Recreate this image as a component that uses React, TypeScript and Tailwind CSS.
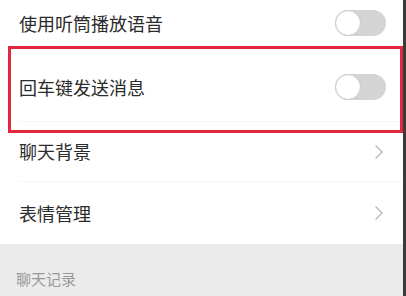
import React from "react";

const Toggle = () => (
  <div className="relative h-[26px] w-[51px] rounded-full bg-[#d4d4d4]">
    <div className="absolute left-0 top-0 h-[26px] w-[26px] rounded-full border border-[#c8c8c8] bg-white" />
  </div>
);

const Chevron = () => (
  <svg width="8" height="14" viewBox="0 0 8 14" fill="none">
    <path d="M1 1l6 6-6 6" stroke="#b5b5b5" strokeWidth="1.3" strokeLinecap="round" strokeLinejoin="round" />
  </svg>
);

const App = () => {
  const font = { fontFamily: '"Noto Sans CJK SC", "Noto Sans", sans-serif' };
  return (
    <main className="relative flex h-[296px] w-[406px] overflow-hidden bg-white" style={font}>
      <div className="flex w-[403px] flex-col">
        <div className="flex h-[53px] items-center justify-between pb-[7px] pl-[19px] pr-[17px]">
          <span className="text-[18px] text-[#2b2b2b]">使用听筒播放语音</span>
          <Toggle />
        </div>
        <div className="ml-[19px] flex h-[69px] items-center justify-between border-b border-[#f4f4f4] pr-[17px]">
          <span className="text-[18px] text-[#2b2b2b]">回车键发送消息</span>
          <Toggle />
        </div>
        <div className="ml-[19px] flex h-[60px] items-center justify-between border-b border-[#f4f4f4] pr-[20px]">
          <span className="text-[18px] text-[#2b2b2b]">聊天背景</span>
          <Chevron />
        </div>
        <div className="flex h-[62px] items-center justify-between pl-[19px] pr-[20px]">
          <span className="text-[18px] text-[#2b2b2b]">表情管理</span>
          <Chevron />
        </div>
        <div className="flex-1 bg-[#ebebeb] pl-[16px] pt-[22px]">
          <span className="text-[15px] leading-[20px] text-[#999]">聊天记录</span>
        </div>
      </div>
      <div className="w-[3px] bg-[#3a3a3a]" />
      <div className="absolute left-[8px] top-[46px] h-[87px] w-[395px] border-[3px] border-[#e3273f]" />
    </main>
  );
};

export default App;
